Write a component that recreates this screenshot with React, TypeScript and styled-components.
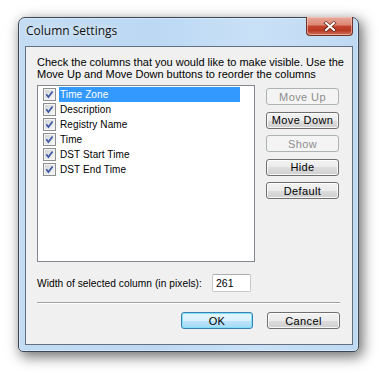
import React from "react";
import styled, { createGlobalStyle, css } from "styled-components";

const Global = createGlobalStyle`
  html, body { margin: 0; padding: 0; background: #ffffff; }
  body { width: 379px; height: 373px; overflow: hidden; font-family: "Liberation Sans", Arial, sans-serif; }
  * { box-sizing: border-box; }
`;

const Window = styled.div`
  margin: 17px 0 0 18px;
  width: 341px;
  height: 335px;
  border: 1px solid #3b4756;
  border-radius: 7px 7px 5px 5px;
  background: linear-gradient(to right, #c3dcf3 0%, #bcd8f3 40%, #c9e1f7 70%, #bed9f2 100%);
  box-shadow: 0 0 0 1px rgba(255, 255, 255, 0.35) inset, 3px 4px 13px 1px rgba(0, 0, 0, 0.55);
  padding: 0 5px 6px 6px;
  display: flex;
  flex-direction: column;
`;

const TitleBar = styled.div`
  height: 28px;
  display: flex;
  justify-content: space-between;
  align-items: flex-start;
`;

const Title = styled.div`
  font-family: "Open Sans", "Noto Sans", sans-serif;
  font-size: 12px;
  line-height: 16px;
  color: #111;
  padding: 5px 0 0 1px;
  text-shadow: 0 0 6px rgba(255, 255, 255, 0.9);
`;

const CloseButton = styled.div`
  margin-top: -1px;
  width: 47px;
  height: 19px;
  border: 1px solid #6e3226;
  border-top: none;
  border-radius: 0 0 4px 4px;
  background: linear-gradient(#e9a99b 0%, #dc8672 45%, #c4452f 50%, #b83a24 75%, #d0735b 100%);
  box-shadow: inset 0 0 0 1px rgba(255, 210, 200, 0.55);
  display: flex;
  align-items: center;
  justify-content: center;
`;

const Client = styled.div`
  flex: 1;
  border: 1px solid #62707f;
  background: #f0f0f0;
  padding: 9px 12px 0 11px;
  display: flex;
  flex-direction: column;
`;

const Instructions = styled.div`
  font-size: 11px;
  line-height: 12px;
  color: #000;
  white-space: nowrap;
`;

const MainRow = styled.div`
  display: flex;
  gap: 11px;
  margin-top: 5px;
`;

const ListBox = styled.div`
  width: 218px;
  height: 177px;
  border: 1px solid #828790;
  background: #fff;
  padding-top: 1px;
`;

const Item = styled.div`
  height: 15px;
  display: flex;
  align-items: center;
  padding-left: 5px;
`;

const ItemLabel = styled.div<{ $selected?: boolean }>`
  margin-left: 3px;
  width: 181px;
  height: 15px;
  padding-left: 1px;
  font-size: 10px;
  letter-spacing: 0.1px;
  line-height: 15px;
  color: ${(p) => (p.$selected ? "#fff" : "#000")};
  background: ${(p) => (p.$selected ? "#3399ff" : "transparent")};
`;

const ButtonColumn = styled.div`
  display: flex;
  flex-direction: column;
  gap: 6.5px;
  padding-top: 3px;
`;

const Button = styled.div<{ $disabled?: boolean; $default?: boolean; $w?: number }>`
  width: ${(p) => p.$w ?? 73}px;
  height: 17px;
  border-radius: 3px;
  font-size: 11px;
  letter-spacing: 0.4px;
  display: flex;
  align-items: center;
  justify-content: center;
  ${(p) =>
    p.$disabled
      ? css`
          border: 1px solid #adb2b5;
          background: #f4f4f4;
          color: #8d8d8d;
        `
      : p.$default
      ? css`
          border: 1px solid #3c7fb1;
          background: linear-gradient(#e8f6fd 0%, #d9f0fc 50%, #bee6fd 50%, #a7d9f5 100%);
          box-shadow: inset 0 0 0 1px #7ee1fb;
          color: #000;
        `
      : css`
          border: 1px solid #707070;
          background: linear-gradient(#f2f2f2 0%, #ebebeb 50%, #dddddd 50%, #cfcfcf 100%);
          box-shadow: inset 0 0 0 1px rgba(255, 255, 255, 0.8);
          color: #000;
        `}
`;

const WidthRow = styled.div`
  display: flex;
  align-items: center;
  margin-top: 12px;
  height: 18px;
`;

const WidthLabel = styled.div`
  font-size: 10.2px;
  letter-spacing: 0.05px;
  width: 175px;
  white-space: nowrap;
`;

const WidthInput = styled.div`
  width: 39px;
  height: 18px;
  border: 1px solid #c5c8cc;
  border-top-color: #abadb3;
  border-radius: 2px;
  background: #fff;
  font-size: 10.5px;
  line-height: 16px;
  padding-left: 3px;
`;

const Separator = styled.div`
  margin-top: 10px;
  height: 2px;
  border-top: 1px solid #a0a0a0;
  border-bottom: 1px solid #ffffff;
`;

const Footer = styled.div`
  display: flex;
  justify-content: flex-end;
  gap: 14px;
  margin-top: 8px;
`;

const CheckBox = () => (
  <svg width="13" height="13" viewBox="0 0 13 13">
    <defs>
      <linearGradient id="cbg" x1="0" y1="0" x2="1" y2="1">
        <stop offset="0" stopColor="#d2d4d8" />
        <stop offset="1" stopColor="#f6f6f6" />
      </linearGradient>
    </defs>
    <rect x="0.5" y="0.5" width="12" height="12" fill="#f4f4f4" stroke="#8f8f8f" />
    <rect x="2" y="2" width="9" height="9" fill="url(#cbg)" />
    <path d="M3.3 6.3 L5.4 9 L9.6 3.4" fill="none" stroke="#3f58a4" strokeWidth="1.7" />
  </svg>
);

const CloseGlyph = () => (
  <svg width="14" height="11" viewBox="0 0 14 11">
    <path d="M3 2 L11 9 M11 2 L3 9" stroke="#4a1a12" strokeWidth="3.6" strokeLinecap="square" opacity="0.75" />
    <path d="M3 2 L11 9 M11 2 L3 9" stroke="#ffffff" strokeWidth="2" strokeLinecap="square" />
  </svg>
);

const columns = ["Time Zone", "Description", "Registry Name", "Time", "DST Start Time", "DST End Time"];

export default function App() {
  return (
    <>
      <Global />
      <Window>
        <TitleBar>
          <Title>Column Settings</Title>
          <CloseButton>
            <CloseGlyph />
          </CloseButton>
        </TitleBar>
        <Client>
          <Instructions>
            Check the columns that you would like to make visible. Use the
            <br />
            Move Up and Move Down buttons to reorder the columns
          </Instructions>
          <MainRow>
            <ListBox>
              {columns.map((c, i) => (
                <Item key={c}>
                  <CheckBox />
                  <ItemLabel $selected={i === 0}>{c}</ItemLabel>
                </Item>
              ))}
            </ListBox>
            <ButtonColumn>
              <Button $disabled>Move Up</Button>
              <Button>Move Down</Button>
              <Button $disabled>Show</Button>
              <Button>Hide</Button>
              <Button>Default</Button>
            </ButtonColumn>
          </MainRow>
          <WidthRow>
            <WidthLabel>Width of selected column (in pixels):</WidthLabel>
            <WidthInput>261</WidthInput>
          </WidthRow>
          <Separator />
          <Footer>
            <Button $default $w={72}>OK</Button>
            <Button $w={73}>Cancel</Button>
          </Footer>
        </Client>
      </Window>
    </>
  );
}
